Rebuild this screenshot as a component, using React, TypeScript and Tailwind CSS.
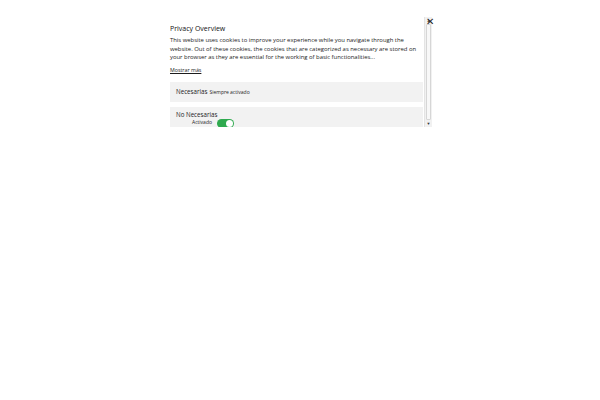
import React from 'react';

function Toggle() {
  return (
    <span className="relative block h-[9px] w-[17px] rounded-full bg-[#2faa4f]">
      <span className="absolute right-[1px] top-[1px] h-[7px] w-[7px] rounded-full bg-white" />
    </span>
  );
}

export default function App() {
  return (
    <div className="min-h-[400px] w-[600px] bg-white pl-[160px] pt-[17px]" style={{ fontFamily: '"Open Sans", sans-serif' }}>
      <div className="relative flex h-[110px] w-[272px]">
        <div className="flex h-full w-[264px] flex-col overflow-hidden pl-[10px] pr-[1px] pt-[6px] text-[#1c1c1c]">
          <div className="text-[7px] leading-[12px] text-[#111]">Privacy Overview</div>
          <p className="mt-[1px] text-[5.9px] leading-[8.5px]">
            This website uses cookies to improve your experience while you navigate through the website. Out of these cookies, the cookies that are categorized as necessary are stored on your browser as they are essential for the working of basic functionalities...
          </p>
          <div className="mt-[4px] text-[5.3px] leading-[8px] underline">Mostrar más</div>
          <div className="mt-[8px] flex h-[20px] shrink-0 items-center bg-[#f2f2f2] px-[6px]">
            <span className="text-[6.2px] leading-[8px]">Necesarias</span>
            <span className="ml-[2px] text-[5px] leading-[8px]">Siempre activado</span>
          </div>
          <div className="mt-[5px] flex h-[24px] shrink-0 flex-col bg-[#f2f2f2] px-[6px] pt-[4px] leading-none">
            <span className="text-[6.2px] leading-[7px]">No Necesarias</span>
            <div className="-mt-[1px] flex items-center leading-none">
              <span className="ml-[16px] text-[5px] leading-[6px]">Activado</span>
              <span className="ml-[5px] mt-[2px] block"><Toggle /></span>
            </div>
          </div>
        </div>
        <div className="flex h-full w-[8px] flex-col border-l border-[#e4e4e4] bg-[#f1f1f1]">
          <div className="flex h-[7px] items-center justify-center text-[4px] leading-none text-[#555]">▲</div>
          <div className="mx-[1px] flex-1 rounded-[1px] border border-[#d6d6d6] bg-[#f8f8f8]" />
          <div className="flex h-[7px] items-center justify-center text-[4px] leading-none text-[#333]">▼</div>
        </div>
        <div className="absolute right-[-2px] top-[-1px] text-[10px] leading-none text-[#222]">✕</div>
      </div>
    </div>
  );
}
